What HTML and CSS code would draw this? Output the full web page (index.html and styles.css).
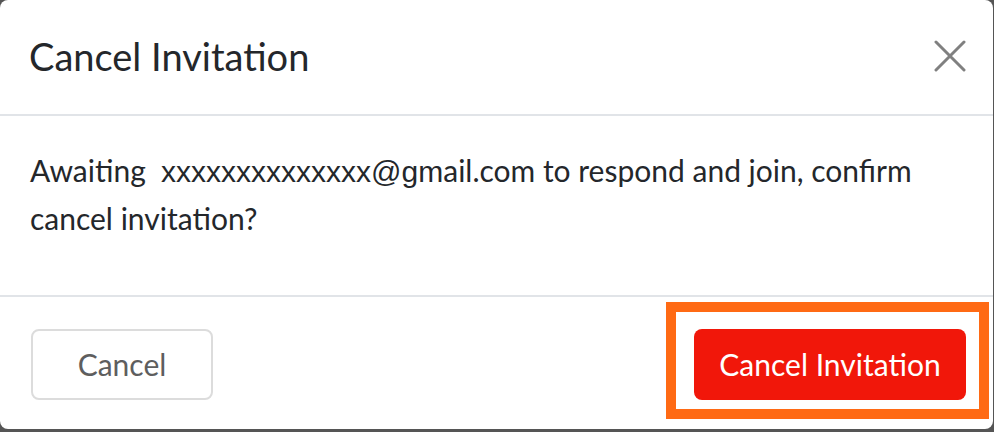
FILE: index.html
```html
<!DOCTYPE html>
<html lang="en">
<head>
<meta charset="utf-8">
<title>Cancel Invitation</title>
<link rel="stylesheet" href="styles.css">
</head>
<body>
<div class="modal">
  <div class="modal-header">
    <h2 class="modal-title">Cancel Invitation</h2>
    <button class="close-btn" aria-label="Close">
      <svg width="32" height="32" viewBox="0 0 32 32"><path d="M2 2 L30 30 M30 2 L2 30" stroke="#808080" stroke-width="3" stroke-linecap="round" fill="none"/></svg>
    </button>
  </div>
  <div class="modal-body">
    <p class="message">Awaiting&nbsp; <span class="email">xxxxxxxxxxxxxx@gm</span>ail.com to respond and join, confirm cancel invitation?</p>
  </div>
  <div class="modal-footer">
    <button class="btn btn-secondary">Cancel</button>
    <button class="btn btn-danger">Cancel Invitation</button>
    <div class="highlight"></div>
  </div>
</div>
</body>
</html>
```

FILE: styles.css
```css
html, body {
  margin: 0;
  padding: 0;
  background: #555555;
}
body {
  width: 994px;
  height: 432px;
  overflow: hidden;
  font-family: Lato, "Open Sans", sans-serif;
  color: #24272b;
}
.modal {
  width: 993px;
  height: 429px;
  background: #ffffff;
  border-radius: 8px;
  display: flex;
  flex-direction: column;
  box-sizing: border-box;
}
.modal-header {
  height: 116px;
  display: flex;
  align-items: center;
  justify-content: space-between;
  padding: 0 27px 0 29px;
  border-bottom: 2px solid #e1e4e8;
  box-sizing: border-box;
  flex: none;
}
.modal-title {
  margin: 0;
  font-size: 38px;
  font-weight: 400;
  line-height: 1;
  margin-top: -3px;
}
.close-btn {
  background: none;
  border: none;
  padding: 0;
  width: 32px;
  height: 32px;
  margin-top: -2px;
  display: flex;
}
.modal-body {
  height: 181px;
  padding: 0 30px;
  box-sizing: border-box;
  border-bottom: 2px solid #e1e4e8;
  flex: none;
}
.message {
  margin: 0;
  padding-top: 31px;
  font-size: 30px;
  line-height: 47px;
}
.email {
  font-family: "Liberation Sans", Arial, sans-serif;
  font-size: 30px;
}
.modal-footer {
  position: relative;
  flex: 1;
  display: flex;
  align-items: center;
  justify-content: space-between;
  padding: 0 27px 0 31px;
}
.btn {
  height: 71px;
  border-radius: 8px;
  font-family: Lato, "Open Sans", sans-serif;
  font-size: 30px;
  padding: 0;
  margin-top: 2px;
}
.btn-secondary {
  width: 182px;
  background: #ffffff;
  border: 2px solid #dcdcdc;
  color: #5e5e5e;
}
.btn-danger {
  width: 272px;
  background: #f1170a;
  border: none;
  color: #ffffff;
}
.highlight {
  position: absolute;
  left: 666px;
  top: 5px;
  width: 323px;
  height: 117px;
  border: 10px solid #ff6a14;
  box-sizing: border-box;
  pointer-events: none;
}
```
